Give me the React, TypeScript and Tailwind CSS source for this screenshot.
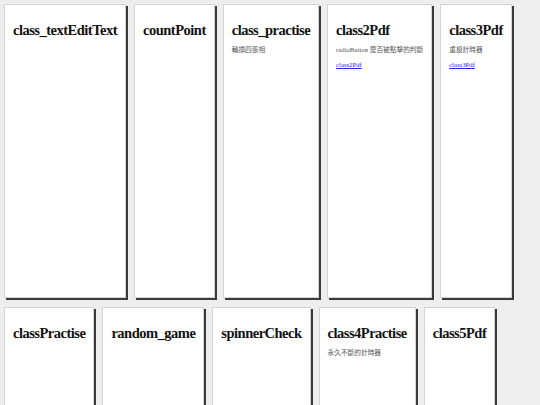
type Item = { title: string; desc?: string; link?: string };

const items: Item[] = [
  { title: 'class_textEditText' },
  { title: 'countPoint' },
  { title: 'class_practise', desc: '輪換四張相' },
  { title: 'class2Pdf', desc: 'radioButton 是否被點擊的判斷', link: 'class2Pdf' },
  { title: 'class3Pdf', desc: '重設計時器', link: 'class3Pdf' },
  { title: 'classPractise' },
  { title: 'random_game' },
  { title: 'spinnerCheck' },
  { title: 'class4Practise', desc: '永久不斷的計時器' },
  { title: 'class5Pdf' },
];

function Card({ item }: { item: Item }) {
  return (
    <div className="h-[294px] shrink-0 bg-white border border-[#d4d4d4] shadow-[2px_2px_0_#3a3a3a] px-[8px] pt-[16px]">
      <h2 className="text-[14.5px] leading-[18px] tracking-[-0.5px] font-bold text-[#111] whitespace-nowrap">
        {item.title}
      </h2>
      {item.desc && (
        <p className="mt-[6px] text-[6.7px] leading-[10px] text-[#555] whitespace-nowrap">{item.desc}</p>
      )}
      {item.link && (
        <a href="#" className="block mt-[5px] text-[6.7px] leading-[10px] text-[#2a2ae0] underline whitespace-nowrap">
          {item.link}
        </a>
      )}
    </div>
  );
}

export default function App() {
  return (
    <div
      className="min-h-screen bg-[#eeeeee] p-[4px] flex flex-wrap content-start gap-x-[8px] gap-y-[9px]"
      style={{ fontFamily: '"Liberation Serif", "Noto Sans CJK TC", serif' }}
    >
      {items.map((item) => (
        <Card key={item.title} item={item} />
      ))}
    </div>
  );
}
